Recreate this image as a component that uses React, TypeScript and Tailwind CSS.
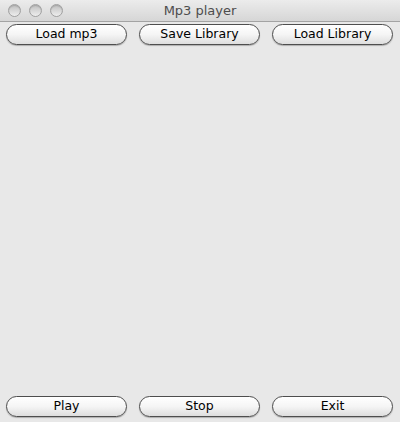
const font = { fontFamily: '"DejaVu Sans", "Lucida Grande", sans-serif' };

const TrafficLight = () => (
  <div className="h-[13px] w-[13px] rounded-full border border-[#a0a0a0] bg-gradient-to-b from-[#c0c0c0] to-[#eeeeee] shadow-[inset_0_1px_1px_rgba(0,0,0,0.15)]" />
);

const AquaButton = ({ label }: { label: string }) => (
  <button className="flex h-[21px] w-[121px] items-center justify-center rounded-full border border-[#4e4e4e] bg-gradient-to-b from-[#ffffff] via-[#f5f5f5] to-[#dedede] text-[12.5px] leading-none text-black shadow-[0_1px_1px_rgba(0,0,0,0.25)]">
    {label}
  </button>
);

export default function App() {
  return (
    <div className="flex h-[422px] w-[400px] flex-col bg-[#e8e8e8]" style={font}>
      {/* title bar */}
      <div className="relative flex h-[22px] items-center justify-center border-b border-[#a3a3a3] bg-gradient-to-b from-[#ececec] to-[#d6d6d6]">
        <div className="absolute left-[8px] top-[4px] flex gap-[8px]">
          <TrafficLight />
          <TrafficLight />
          <TrafficLight />
        </div>
        <span className="text-[13px] text-[#4d4d4d]">Mp3 player</span>
      </div>

      <div className="flex gap-[12px] pl-[6px] pt-[2px]">
        <AquaButton label="Load mp3" />
        <AquaButton label="Save Library" />
        <AquaButton label="Load Library" />
      </div>

      <div className="flex-1" />

      <div className="flex gap-[12px] pb-[5px] pl-[6px]">
        <AquaButton label="Play" />
        <AquaButton label="Stop" />
        <AquaButton label="Exit" />
      </div>
    </div>
  );
}
